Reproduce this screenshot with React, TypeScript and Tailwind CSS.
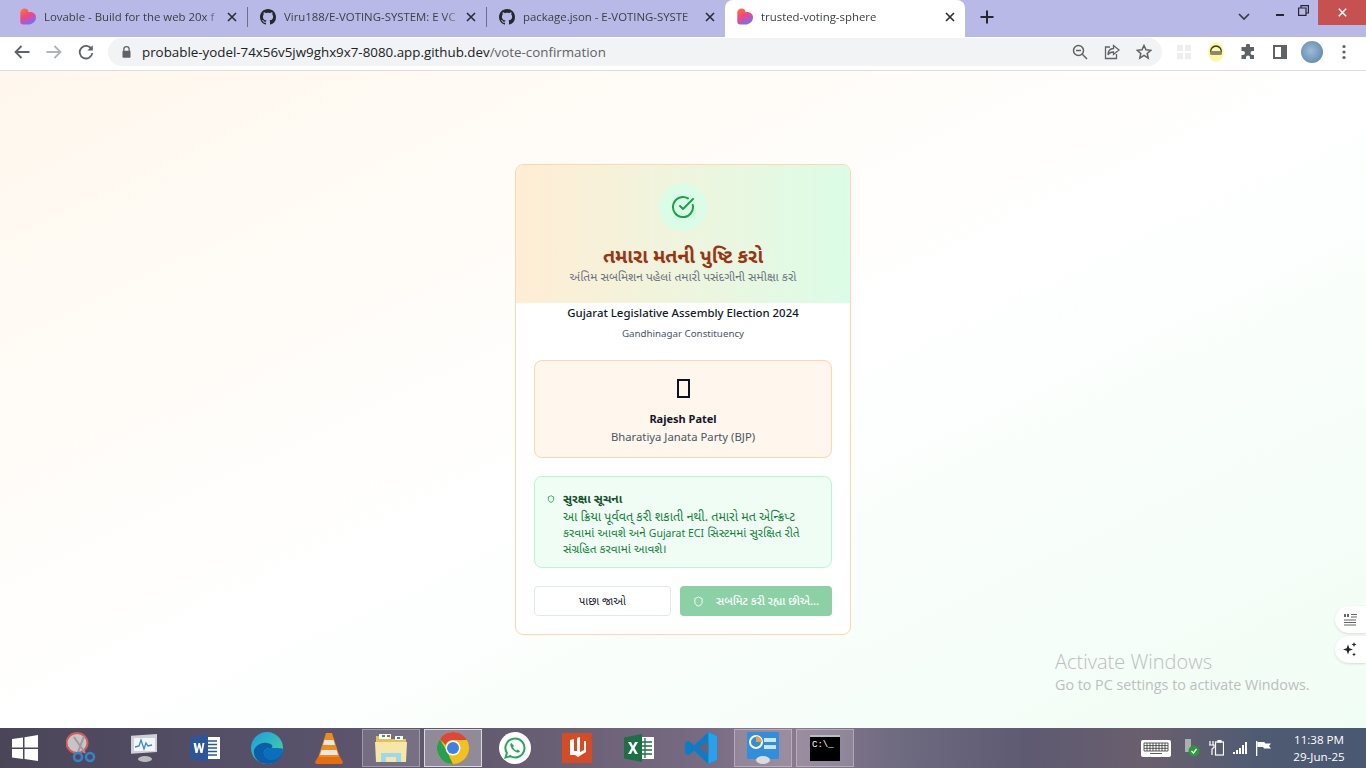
import React from "react";

const UI = { fontFamily: '"Open Sans","Noto Sans",sans-serif' };
const BODY = { fontFamily: '"Noto Sans","Noto Sans Gujarati","Open Sans",sans-serif' };

function LovableIcon() {
  return (
    <svg width="16" height="17" viewBox="0 0 16 17" className="shrink-0">
      <defs>
        <linearGradient id="lv" x1="0" y1="0" x2="0.5" y2="1">
          <stop offset="0" stopColor="#ff7a2f" />
          <stop offset="0.5" stopColor="#f9457a" />
          <stop offset="1" stopColor="#7a6cf5" />
        </linearGradient>
      </defs>
      <path d="M4.5 0.5C7 0.5 8.5 2.2 8.5 4.3C10 3.2 16 4.2 16 9.2C16 13.5 12.5 16.5 8 16.5H3C1.2 16.5 0.3 15.3 0.3 13.8V4.6C0.3 2.2 2.2 0.5 4.5 0.5Z" fill="url(#lv)" />
    </svg>
  );
}
function GithubIcon() {
  return (
    <svg width="16" height="16" viewBox="0 0 16 16" fill="#24292f" className="shrink-0">
      <path d="M8 0C3.58 0 0 3.58 0 8c0 3.54 2.29 6.53 5.47 7.59.4.07.55-.17.55-.38 0-.19-.01-.82-.01-1.49-2.01.37-2.53-.49-2.69-.94-.09-.23-.48-.94-.82-1.13-.28-.15-.68-.52-.01-.53.63-.01 1.08.58 1.23.82.72 1.21 1.87.87 2.33.66.07-.52.28-.87.51-1.07-1.78-.2-3.64-.89-3.64-3.95 0-.87.31-1.59.82-2.15-.08-.2-.36-1.02.08-2.12 0 0 .67-.21 2.2.82.64-.18 1.32-.27 2-.27s1.36.09 2 .27c1.53-1.04 2.2-.82 2.2-.82.44 1.1.16 1.92.08 2.12.51.56.82 1.27.82 2.15 0 3.07-1.87 3.75-3.65 3.95.29.25.54.73.54 1.48 0 1.07-.01 1.93-.01 2.2 0 .21.15.46.55.38A8.01 8.01 0 0 0 16 8c0-4.42-3.58-8-8-8z" />
    </svg>
  );
}
function CloseX() {
  return (
    <svg width="10" height="10" viewBox="0 0 10 10" stroke="#2b2b33" strokeWidth="1.6" className="shrink-0">
      <path d="M1 1l8 8M9 1l-8 8" />
    </svg>
  );
}
function Tab({ icon, title, w, active }: { icon: React.ReactNode; title: string; w: string; active?: boolean }) {
  return (
    <div className={`${w} flex h-full items-center pl-3 pr-[10px] pb-[4px] shrink-0 ${active ? "bg-white rounded-t-lg" : ""}`}>
      {icon}
      <span className="ml-2 flex-1 overflow-hidden whitespace-nowrap text-[11.4px] leading-[16px] text-[#3c4043] [mask-image:linear-gradient(to_right,black_90%,transparent)]">
        {title}
      </span>
      <span className="ml-1">
        <CloseX />
      </span>
    </div>
  );
}

function ToolIcon({ children, w = 32 }: { children: React.ReactNode; w?: number }) {
  return (
    <div className="flex h-[28px] items-center justify-center shrink-0" style={{ width: w }}>
      {children}
    </div>
  );
}

function TabBar() {
  return (
    <div className="flex h-[37px] items-end bg-[#b9b9e8] shrink-0 pl-2">
      <div className="flex h-[37px] items-center">
        <Tab w="w-[239px]" icon={<LovableIcon />} title="Lovable - Build for the web 20x f" />
        <div className="mb-[4px] h-5 w-px bg-[#6e6e8c]" />
        <Tab w="w-[238px]" icon={<GithubIcon />} title="Viru188/E-VOTING-SYSTEM: E VC" />
        <div className="mb-[4px] h-5 w-px bg-[#6e6e8c]" />
        <Tab w="w-[238px]" icon={<GithubIcon />} title="package.json - E-VOTING-SYSTE" />
        <Tab w="w-[240px]" active icon={<LovableIcon />} title="trusted-voting-sphere" />
        <div className="ml-[15px] mb-[4px]">
          <svg width="14" height="14" viewBox="0 0 14 14" stroke="#26262e" strokeWidth="2">
            <path d="M7 0.5v13M0.5 7h13" />
          </svg>
        </div>
      </div>
      <div className="flex-1" />
      <div className="flex h-[37px] items-start">
        <div className="mt-[13px] mr-[26px]">
          <svg width="12" height="8" viewBox="0 0 12 8" fill="none" stroke="#3a3a48" strokeWidth="1.7">
            <path d="M1 1l5 5 5-5" />
          </svg>
        </div>
        <div className="mt-[14px] mr-[14px] h-0.5 w-2 bg-[#26262e]" />
        <div className="mt-[5px] mr-[9px]">
          <svg width="11" height="11" viewBox="0 0 11 11" fill="none" stroke="#26262e" strokeWidth="1.2">
            <path d="M0.6 3h7.4v7.4H0.6zM3 3V0.6h7.4V8H8" />
          </svg>
        </div>
        <div className="flex h-[25px] w-[48px] items-center justify-center bg-[#c75050]">
          <svg width="9" height="9" viewBox="0 0 9 9" stroke="#fff" strokeWidth="1.5">
            <path d="M0.8 0.8l7.4 7.4M8.2 0.8l-7.4 7.4" />
          </svg>
        </div>
      </div>
    </div>
  );
}

function Toolbar() {
  return (
    <div className="flex h-[34px] items-start border-b border-[#dcdcdc] bg-white pl-[6px] pt-px shrink-0">
      <ToolIcon>
        <svg width="16" height="14" viewBox="0 0 16 14" fill="none" stroke="#5f6368" strokeWidth="1.8">
          <path d="M15.5 7H1.5M7.5 1L1.5 7l6 6" />
        </svg>
      </ToolIcon>
      <ToolIcon>
        <svg width="16" height="14" viewBox="0 0 16 14" fill="none" stroke="#b0b3b7" strokeWidth="1.8">
          <path d="M0.5 7h14M8.5 1l6 6-6 6" />
        </svg>
      </ToolIcon>
      <ToolIcon>
        <svg width="16" height="16" viewBox="0 0 16 16" fill="none">
          <path d="M13.6 5.2A6.3 6.3 0 1 0 14.3 9" stroke="#5f6368" strokeWidth="1.8" />
          <path d="M14.8 1.2v5.4H9.4z" fill="#5f6368" />
        </svg>
      </ToolIcon>
      <div className="ml-[6px] flex h-[28px] w-[1054px] items-center rounded-full bg-[#f1f3f4] shrink-0 pl-[14px] pr-[2px]">
        <svg width="9" height="12" viewBox="0 0 9 12" className="shrink-0">
          <path d="M1.8 5V3.4a2.7 2.7 0 0 1 5.4 0V5" fill="none" stroke="#5f6368" strokeWidth="1.3" />
          <rect x="0.5" y="4.8" width="8" height="7" rx="1" fill="#5f6368" />
        </svg>
        <span className="ml-[11px] whitespace-nowrap text-[13.35px] text-[#202124]">
          probable-yodel-74x56v5jw9ghx9x7-8080.app.github.dev<span className="text-[#5f6368]">/vote-confirmation</span>
        </span>
        <div className="flex-1" />
        <ToolIcon>
          <svg width="16" height="16" viewBox="0 0 16 16" fill="none" stroke="#5f6368" strokeWidth="1.5">
            <circle cx="6.5" cy="6.5" r="5" />
            <path d="M10.3 10.3L15 15M4 6.5h5" />
          </svg>
        </ToolIcon>
        <ToolIcon>
          <svg width="16" height="16" viewBox="0 0 16 16" fill="none" stroke="#5f6368" strokeWidth="1.3">
            <path d="M6 3H1.5v11.5h11V10" />
            <path d="M9.5 1.5L15 6l-5.5 4.5V8C7 8 5 9 4 11c0-4 2-6.300 5.500-6.500z" />
          </svg>
        </ToolIcon>
        <ToolIcon>
          <svg width="16" height="16" viewBox="0 0 16 16" fill="none" stroke="#5f6368" strokeWidth="1.5">
            <path d="M8 1.500l2 4.300 4.700.5-3.500 3.200 1 4.600L8 11.300l-4.200 2.800 1-4.600L1.300 6.300 6 5.800z" />
          </svg>
        </ToolIcon>
      </div>
      <div className="ml-[6px] flex items-center">
        <ToolIcon>
          <svg width="14" height="14" viewBox="0 0 14 14" fill="#eeeef0">
            <rect x="0" y="0" width="6" height="6" />
            <rect x="8" y="0" width="6" height="6" />
            <rect x="0" y="8" width="6" height="6" />
            <rect x="8" y="8" width="6" height="6" />
          </svg>
        </ToolIcon>
        <ToolIcon>
          <svg width="16" height="20" viewBox="0 0 16 20">
            <ellipse cx="8" cy="10" rx="8" ry="10" fill="#fdf8a8" />
            <path d="M2.500 10a5.500 6 0 0 1 11 0" fill="none" stroke="#333" strokeWidth="1.300" />
            <rect x="2" y="9" width="12" height="4" rx="1.500" fill="#8a8a6a" />
          </svg>
        </ToolIcon>
        <ToolIcon>
          <svg width="16" height="16" viewBox="0 0 16 16" fill="#5f6368">
            <path d="M6 1.500a2 2 0 0 1 4 0V3h4v4h-1.500a2 2 0 0 0 0 4H14v4H10v-1.500a2 2 0 0 0-4 0V15H1.500v-4H3a2 2 0 0 0 0-4H1.500V3H6z" />
          </svg>
        </ToolIcon>
        <ToolIcon>
          <svg width="14" height="14" viewBox="0 0 14 14" fill="none">
            <rect x="1" y="1" width="12" height="12" stroke="#5f6368" strokeWidth="2" />
            <rect x="8" y="1" width="5" height="12" fill="#5f6368" />
          </svg>
        </ToolIcon>
        <ToolIcon>
          <div className="h-[22px] w-[22px] rounded-full bg-[radial-gradient(circle_at_45%_45%,#9fbbd3,#4f7ea8)]" />
        </ToolIcon>
        <ToolIcon>
          <svg width="4" height="16" viewBox="0 0 4 16" fill="#5f6368">
            <circle cx="2" cy="2.500" r="1.600" />
            <circle cx="2" cy="8" r="1.600" />
            <circle cx="2" cy="13.500" r="1.600" />
          </svg>
        </ToolIcon>
      </div>
    </div>
  );
}

function Card() {
  return (
    <div className="w-[336px] h-[471px] rounded-lg border border-orange-200 bg-white overflow-hidden flex flex-col" style={BODY}>
      <div className="h-[138px] bg-gradient-to-r from-orange-100 to-green-100 flex flex-col items-center pt-[18px] shrink-0">
        <div className="flex h-12 w-12 items-center justify-center rounded-full bg-green-100">
          <svg width="24" height="24" viewBox="0 0 24 24" fill="none" stroke="#16a34a" strokeWidth="2" strokeLinecap="round" strokeLinejoin="round">
            <path d="M21.800 10A10 10 0 1 1 17 3.340" />
            <path d="m9 11 3 3L22 4" />
          </svg>
        </div>
        <h1 className="mt-[11px] text-[19.500px] leading-[28px] font-bold text-[#9a3412]">તમારા મતની પુષ્ટિ કરો</h1>
        <p className="text-[12px] leading-[12px] mt-[1px] text-[#6b7280]">અંતિમ સબમિશન પહેલાં તમારી પસંદગીની સમીક્ષા કરો</p>
      </div>
      <div className="px-[18px] flex flex-col flex-1">
        <p className="mt-[1px] text-center text-[11.400px] leading-[18px] font-medium text-[#111827]">Gujarat Legislative Assembly Election 2024</p>
        <p className="mt-[4px] text-center text-[9.750px] leading-[16px] text-[#4b5563]">Gandhinagar Constituency</p>
        <div className="mt-[18px] h-[98px] rounded-lg border border-orange-200 bg-orange-50 flex flex-col items-center pt-[18px] shrink-0">
          <div className="h-[19px] w-[13px] border-2 border-[#0b1220] shrink-0" />
          <p className="mt-[13px] text-[11px] leading-[16px] font-bold text-[#111827]">Rajesh Patel</p>
          <p className="mt-[2px] text-[11.300px] leading-[16px] text-[#4b5563]">Bharatiya Janata Party (BJP)</p>
        </div>
        <div className="mt-[18px] h-[92px] rounded-lg border border-green-200 bg-green-50 flex pl-[12px] pt-[14px] shrink-0">
          <svg width="8" height="8" viewBox="0 0 24 24" fill="none" stroke="#16a34a" strokeWidth="2.500" className="mt-[4px] shrink-0">
            <path d="M20 13c0 5-3.500 7.500-7.660 8.950a1 1 0 0 1-.67-.010C7.500 20.500 4 18 4 13V6a1 1 0 0 1 1-1c2 0 4.500-1.200 6.240-2.720a1.170 1.170 0 0 1 1.520 0C14.510 3.810 17 5 19 5a1 1 0 0 1 1 1z" />
          </svg>
          <div className="ml-[8px] w-[258px]">
            <p className="text-[12px] leading-[16px] font-bold text-[#14532d]">સુરક્ષા સૂચના</p>
            <p className="mt-[2px] text-[11.800px] leading-[15.500px] text-[#15803d] whitespace-nowrap">
              <span className="text-[12.500px]">આ ક્રિયા પૂર્વવત્ કરી શકાતી નથી. તમારો મત એન્ક્રિપ્ટ</span>
              <br />
              કરવામાં આવશે અને <span className="text-[10.500px]">Gujarat ECI</span> સિસ્ટમમાં સુરક્ષિત રીતે
              <br />
              સંગ્રહિત કરવામાં આવશે।
            </p>
          </div>
        </div>
        <div className="mt-[18px] flex gap-[9px]">
          <div className="flex h-[30px] w-[137px] items-center justify-center rounded-[4px] border border-[#e2e8f0] bg-white text-[11px] text-[#111827]">
            પાછા જાઓ
          </div>
          <div className="flex h-[30px] w-[152px] items-center rounded-[4px] bg-[#8bd1a5] pl-[13px] text-[11.300px] font-medium text-white">
            <svg width="11" height="11" viewBox="0 0 24 24" fill="none" stroke="#ffffff" strokeWidth="2">
              <path d="M20 13c0 5-3.500 7.500-7.660 8.950a1 1 0 0 1-.67-.010C7.500 20.500 4 18 4 13V6a1 1 0 0 1 1-1c2 0 4.500-1.200 6.240-2.720a1.170 1.170 0 0 1 1.520 0C14.510 3.810 17 5 19 5a1 1 0 0 1 1 1z" />
            </svg>
            <span className="ml-[12px]">સબમિટ કરી રહ્યા છીએ...</span>
          </div>
        </div>
      </div>
    </div>
  );
}

function Slot({ children, box, strong }: { children: React.ReactNode; box?: boolean; strong?: boolean }) {
  return (
    <div className="flex h-[40px] w-[62px] items-center justify-center shrink-0">
      <div
        className={`flex h-[38px] w-[58px] items-center justify-center ${
          box ? (strong ? "border border-[#d8d8e0] bg-white/30" : "border border-white/30 bg-white/15") : ""
        }`}
      >
        {children}
      </div>
    </div>
  );
}

function Taskbar() {
  return (
    <div className="flex h-[40px] items-center shrink-0 bg-[linear-gradient(90deg,#4a4658_0%,#57506a_20%,#625a6e_35%,#75697f_50%,#8a7a90_58%,#6e6a80_66%,#5e5a72_75%,#6a5f6e_84%,#4f5b72_92%,#4a5872_100%)]">
      <div className="flex w-[50px] items-center justify-center shrink-0">
        <svg width="26" height="26" viewBox="0 0 26 26" fill="#fff">
          <path d="M0 4l11-1.500V12.500H0zM12.500 2.300L26 0V12.500H12.500zM0 14h11v10L0 22.500zM12.500 14H26v12l-13.500-2z" />
        </svg>
      </div>
      <Slot>
        <svg width="30" height="32" viewBox="0 0 30 32" fill="none">
          <ellipse cx="11" cy="11" rx="10.500" ry="10" fill="#c9c4c4" stroke="#d25a5a" strokeWidth="2" />
          <path d="M8 5l11 16M18 4L12 20" stroke="#9a9aa0" strokeWidth="2" />
          <circle cx="12" cy="25" r="4" stroke="#2f86c9" strokeWidth="2.500" />
          <circle cx="24" cy="25" r="4" stroke="#2f86c9" strokeWidth="2.500" />
        </svg>
      </Slot>
      <Slot>
        <svg width="30" height="30" viewBox="0 0 30 30" fill="none">
          <rect x="3" y="3" width="26" height="18" fill="#cfd2d4" transform="skewY(-4)" />
          <rect x="6" y="5" width="21" height="13" fill="#f2f6f8" />
          <path d="M7 14l4-1 2-6 3 9 2-6 2 3 4-1" stroke="#3f87c4" strokeWidth="1.300" />
          <ellipse cx="17" cy="26" rx="7" ry="3" fill="#b8babb" />
        </svg>
      </Slot>
      <Slot>
        <svg width="30" height="28" viewBox="0 0 30 28">
          <rect x="9" y="3" width="21" height="22" fill="#fff" />
          <path d="M13 7h14M13 10.500h14M13 14h14M13 17.500h14M13 21h14" stroke="#2b579a" strokeWidth="1.500" />
          <path d="M0 3.500L18 0v28L0 24.500z" fill="#2b579a" />
          <path d="M3.500 9l2 10h2l1.500-6 1.500 6h2l2-10h-2l-1 6-1.500-6h-1.500l-1.500 6-1-6z" fill="#fff" />
        </svg>
      </Slot>
      <Slot>
        <svg width="32" height="32" viewBox="0 0 32 32">
          <defs>
            <linearGradient id="edge" x1="0" y1="0" x2="1" y2="1">
              <stop offset="0" stopColor="#1b9de2" />
              <stop offset="0.6" stopColor="#35c1b5" />
              <stop offset="1" stopColor="#6ed25a" />
            </linearGradient>
          </defs>
          <circle cx="16" cy="16" r="16" fill="url(#edge)" />
          <path d="M32 19c-1 7-7 13-15 13C8 32 2 26 3 18c2-5 8-8 13-7 5 .500 7 4 4 5-5 0-8 2-7 6 1 5 14 6 19-3z" fill="#0b5ea8" />
          <path d="M13 22c-1-4 2-6 7-6 6 0 12 0 12 1 0 9-10 13-16 10-2-1-3-3-3-5z" fill="#0c6fbd" />
        </svg>
      </Slot>
      <Slot>
        <svg width="28" height="31" viewBox="0 0 28 31">
          <path d="M11 0h6l8 25H3z" fill="#f08a1a" />
          <path d="M9.500 7h9l1.500 5H8zM6.500 17h15l1.500 5H5z" fill="#e8e8e8" />
          <path d="M3 24h22l3 5c0 1-1 2-2 2H2c-1 0-2-1-2-2z" fill="#e96d0c" />
        </svg>
      </Slot>
      <Slot box>
        <svg width="32" height="30" viewBox="0 0 32 30">
          <path d="M1 3h13l2 3h15v22H1z" fill="#e2c35c" />
          <rect x="4" y="1" width="12" height="5" fill="#fff" />
          <rect x="7" y="2" width="3" height="2" fill="#2eaa4a" />
          <rect x="12" y="2" width="3" height="2" fill="#e04a3a" />
          <rect x="20" y="3" width="8" height="4" fill="#fff" />
          <rect x="22" y="4" width="3" height="2" fill="#2f86c9" />
          <path d="M0 9h32l-1 20H1z" fill="#f6e7a8" />
          <path d="M6 29v-9h20v9h-5v-5H11v5z" fill="#9ad9ee" />
        </svg>
      </Slot>
      <Slot box strong>
        <svg width="32" height="32" viewBox="0 0 32 32">
          <circle cx="16" cy="16" r="16" fill="#f2c21a" />
          <path d="M16 0a16 16 0 0 1 13.860 8H16a8 8 0 0 0-7.500 5L2.800 7A16 16 0 0 1 16 0z" fill="#dd4638" />
          <path d="M2.800 7l7 12 6 13A16 16 0 0 1 2.800 7z" fill="#24a04e" />
          <circle cx="16" cy="16" r="7.500" fill="#fff" />
          <circle cx="16" cy="16" r="6" fill="#3f7fe8" />
        </svg>
      </Slot>
      <Slot>
        <svg width="32" height="32" viewBox="0 0 32 32">
          <circle cx="16" cy="16" r="16" fill="#fff" />
          <path d="M16 6.500a9.500 9.500 0 0 0-8.100 14.500L6.500 25.500l4.700-1.300A9.500 9.500 0 1 0 16 6.500z" fill="none" stroke="#25a85a" strokeWidth="2" />
          <path d="M12.500 11c-1 .500-1.500 1.500-1 3 1 3 3.500 5.500 6.500 6.500 1.500.400 2.700-.300 3-1.500l-2.500-1.500-1 1c-1.500-.500-3-2-3.500-3.500l1-1z" fill="#25a85a" />
        </svg>
      </Slot>
      <Slot>
        <svg width="30" height="30" viewBox="0 0 30 30">
          <rect width="30" height="30" fill="#d64a24" />
          <path d="M8 7l4-1v12h3V5l3-1v15l4-2V8h2v11l-8 5-3-2H8z" fill="#fff" />
        </svg>
      </Slot>
      <Slot>
        <svg width="30" height="28" viewBox="0 0 30 28">
          <rect x="10" y="3" width="20" height="22" fill="#fff" />
          <path d="M14 8h14M14 12h14M14 16h14M14 20h14M21 4v20" stroke="#1d7044" strokeWidth="1.300" />
          <path d="M0 3.500L18 0v28L0 24.500z" fill="#1d7044" />
          <path d="M4 8h3l2 4 2-4h3l-3.500 6 3.500 6h-3l-2-4-2 4H4l3.500-6z" fill="#fff" />
        </svg>
      </Slot>
      <Slot>
        <svg width="32" height="32" viewBox="0 0 24 24">
          <path d="M17.500 0L24 3v18l-6.500 3L7 14l-4.500 3.500L0 16V8l2.500-1.500L7 10z" fill="#0c7cc6" />
          <path d="M17.500 0L24 3v18l-6.500 3V0z" fill="#22a2ef" />
          <path d="M17.500 6.500L10 12l7.500 5.500z" fill="#66607a" />
        </svg>
      </Slot>
      <Slot box>
        <svg width="32" height="32" viewBox="0 0 32 32">
          <rect width="32" height="27" rx="1" fill="#2f8fdc" />
          <circle cx="9" cy="10" r="6" fill="none" stroke="#fff" strokeWidth="2" />
          <path d="M9 4a6 6 0 0 1 6 6H9z" fill="#f0a030" />
          <rect x="17" y="6" width="12" height="4" fill="#cfe6f7" />
          <rect x="17" y="13" width="12" height="4" fill="#cfe6f7" />
          <ellipse cx="16" cy="28" rx="7" ry="4" fill="#dcdcdc" />
        </svg>
      </Slot>
      <Slot box>
        <div className="flex h-[26px] w-[30px] flex-col bg-black border-t-2 border-[#b8bcc4] pl-[2px] pt-[3px]">
          <span className="text-[9px] leading-[10px] text-white whitespace-nowrap" style={{ fontFamily: '"Liberation Mono",monospace' }}>
            C:\_
          </span>
        </div>
      </Slot>
      <div className="flex-1" />
      <svg width="30" height="17" viewBox="0 0 30 17" fill="none" className="mr-[13px] shrink-0">
        <rect x="0.500" y="0.500" width="29" height="16" rx="1" fill="#fff" stroke="#fff" />
        <path d="M3 3h24v8H3zM3 5.600h24M3 8.300h24M6 3v8M9 3v8M12 3v8M15 3v8M18 3v8M21 3v8M24 3v8M9 13.500h12" stroke="#333" strokeWidth="0.800" />
      </svg>
      <svg width="16" height="18" viewBox="0 0 16 18" className="mr-[8px] shrink-0">
        <rect x="1" y="0" width="6" height="13" fill="#aab0b4" />
        <circle cx="10" cy="12" r="5.500" fill="#2c9a3c" />
        <path d="M7.500 12l2 2 3-4" fill="none" stroke="#fff" strokeWidth="1.300" />
      </svg>
      <svg width="16" height="16" viewBox="0 0 16 16" fill="none" stroke="#fff" strokeWidth="1.200" className="mr-[9px] shrink-0">
        <rect x="7.500" y="2" width="8" height="13" />
        <rect x="10" y="0.500" width="3" height="1.500" fill="#fff" />
        <path d="M2 1v4M5 1v4M1 5h5v2.500L4 9v6" />
      </svg>
      <svg width="14" height="12" viewBox="0 0 14 12" fill="#fff" className="mr-[9px] shrink-0">
        <rect x="0" y="10" width="2" height="2" />
        <rect x="3" y="8" width="2" height="4" />
        <rect x="6" y="6" width="2" height="6" />
        <rect x="9" y="3" width="2" height="9" />
        <rect x="12" y="0" width="2" height="12" />
      </svg>
      <svg width="15" height="15" viewBox="0 0 15 15" fill="#fff" className="mr-[22px] shrink-0">
        <rect x="0" y="0" width="1.300" height="15" />
        <path d="M1.300 1h7l1 1.500H15l-2 2.500 2 2.500H8l-1-1.500H1.300z" />
      </svg>
      <div className="mr-[21px] flex w-[52px] flex-col items-center whitespace-nowrap text-white text-[11.600px] leading-[17px] shrink-0" style={UI}>
        <span>11:38 PM</span>
        <span>29-Jun-25</span>
      </div>
    </div>
  );
}

export default function App() {
  return (
    <div className="relative flex h-[768px] w-[1366px] flex-col overflow-hidden" style={UI}>
      <TabBar />
      <Toolbar />
      <main className="relative flex flex-1 items-center justify-center bg-gradient-to-br from-orange-50 via-white to-green-50">
        <Card />
        <div className="absolute left-[1055px] top-[579px] text-[#bcc0be] whitespace-nowrap">
          <p className="text-[20px] leading-[24px] font-light">Activate Windows</p>
          <p className="mt-[1px] text-[14.300px] leading-[20px]">Go to PC settings to activate Windows.</p>
        </div>
        <div className="absolute right-0 top-[535px] flex h-[27px] w-[31px] items-center justify-center rounded-l-full bg-white pr-[2px] shadow-sm">
          <svg width="14" height="13" viewBox="0 0 14 13" fill="none" stroke="#666" strokeWidth="1.100">
            <path d="M8 1.500h6M8 4h6M1 7h12M1 9.500h12M1 12h12" />
            <path d="M2 1v3M5 1v3" strokeWidth="2" />
          </svg>
        </div>
        <div className="absolute right-0 top-[565px] flex h-[27px] w-[31px] items-center justify-center rounded-l-full bg-white pr-[2px] shadow-sm">
          <svg width="15" height="15" viewBox="0 0 15 15" fill="#222">
            <path d="M6 2.500l1.300 3.700L11 7.500 7.300 8.800 6 12.500 4.700 8.800 1 7.500l3.700-1.300z" />
            <path d="M12 0l.7 1.800 1.800.7-1.800.7L12 5l-.7-1.800-1.800-.7 1.800-.7zM12 10.500l.6 1.400 1.400.6-1.400.6L12 14.500l-.6-1.400-1.400-.6 1.400-.6z" />
          </svg>
        </div>
      </main>
      <Taskbar />
    </div>
  );
}
